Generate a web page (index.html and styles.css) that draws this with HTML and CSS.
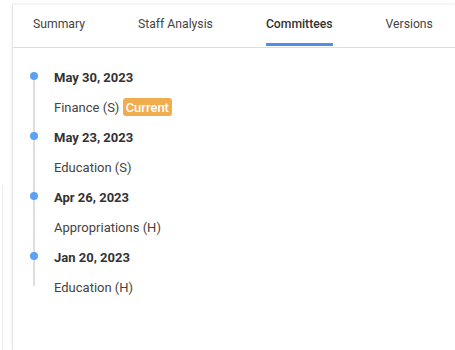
FILE: index.html
```html
<!DOCTYPE html>
<html lang="en">
<head>
    <meta charset="UTF-8">
    <meta name="viewport" content="width=device-width, initial-scale=1.0">
    <title>Bill Committees</title>
    <link rel="stylesheet" href="styles.css">
</head>
<body>
    <div class="page">
        <div class="gutter"><span class="gutter-rule"></span></div>
        <div class="panel">
            <nav class="tabs">
                <a class="tab">Summary</a>
                <a class="tab">Staff Analysis</a>
                <a class="tab active">Committees</a>
                <a class="tab">Versions</a>
            </nav>
            <div class="content">
                <ul class="timeline">
                    <li class="event">
                        <div class="date">May 30, 2023</div>
                        <div class="name">Finance (S) <span class="badge">Current</span></div>
                    </li>
                    <li class="event">
                        <div class="date">May 23, 2023</div>
                        <div class="name">Education (S)</div>
                    </li>
                    <li class="event">
                        <div class="date">Apr 26, 2023</div>
                        <div class="name">Appropriations (H)</div>
                    </li>
                    <li class="event">
                        <div class="date">Jan 20, 2023</div>
                        <div class="name">Education (H)</div>
                    </li>
                </ul>
            </div>
        </div>
    </div>
</body>
</html>
```

FILE: styles.css
```css
body {
    margin: 0;
    padding: 0;
    font-family: Roboto, "Liberation Sans", sans-serif;
    background: #f8f8f8;
    color: #333;
}
.page {
    display: flex;
    height: 350px;
    background: #fff;
}
.gutter {
    width: 12px;
    display: flex;
    flex-direction: column;
}
.gutter-rule {
    margin-top: 185px;
    margin-left: 2px;
    flex: 1;
    border-left: 1px solid #ececec;
}
.panel {
    flex: 1;
    margin-top: 5px;
    background: #fff;
    border-left: 1px solid #e6e6e6;
    box-shadow: 0 -1px 3px rgba(0, 0, 0, 0.08);
}
.tabs {
    display: flex;
    gap: 53px;
    height: 42px;
    padding-left: 20px;
    border-bottom: 1px solid #dcdcdc;
}
.tab {
    font-size: 12.2px;
    color: #444;
    line-height: 38px;
    height: 38px;
    border-bottom: 3px solid transparent;
}
.tab.active {
    color: #333;
    font-weight: 500;
    border-bottom-color: #4f8fe8;
}
.content {
    border-left: 1px solid #e4e4e4;
    margin-left: -1px;
    height: 300px;
}
.timeline {
    list-style: none;
    margin: 0;
    padding: 15px 0 0 0;
    position: relative;
}
.timeline::before {
    content: "";
    position: absolute;
    left: 20px;
    top: 29px;
    height: 209px;
    width: 2px;
    background: #dedede;
}
.event {
    position: relative;
    padding-left: 41px;
}
.event::before {
    content: "";
    position: absolute;
    left: 17px;
    top: 9px;
    width: 8px;
    height: 8px;
    border-radius: 50%;
    background: #5aa2f5;
}
.date {
    font-size: 13px;
    font-weight: bold;
    line-height: 30px;
    color: #333;
}
.name {
    font-size: 13px;
    line-height: 30px;
    color: #444;
}
.badge {
    background: #f0ad4e;
    color: #fff;
    font-weight: 500;
    padding: 2px 3px 1px;
    border-radius: 3px;
}
```
